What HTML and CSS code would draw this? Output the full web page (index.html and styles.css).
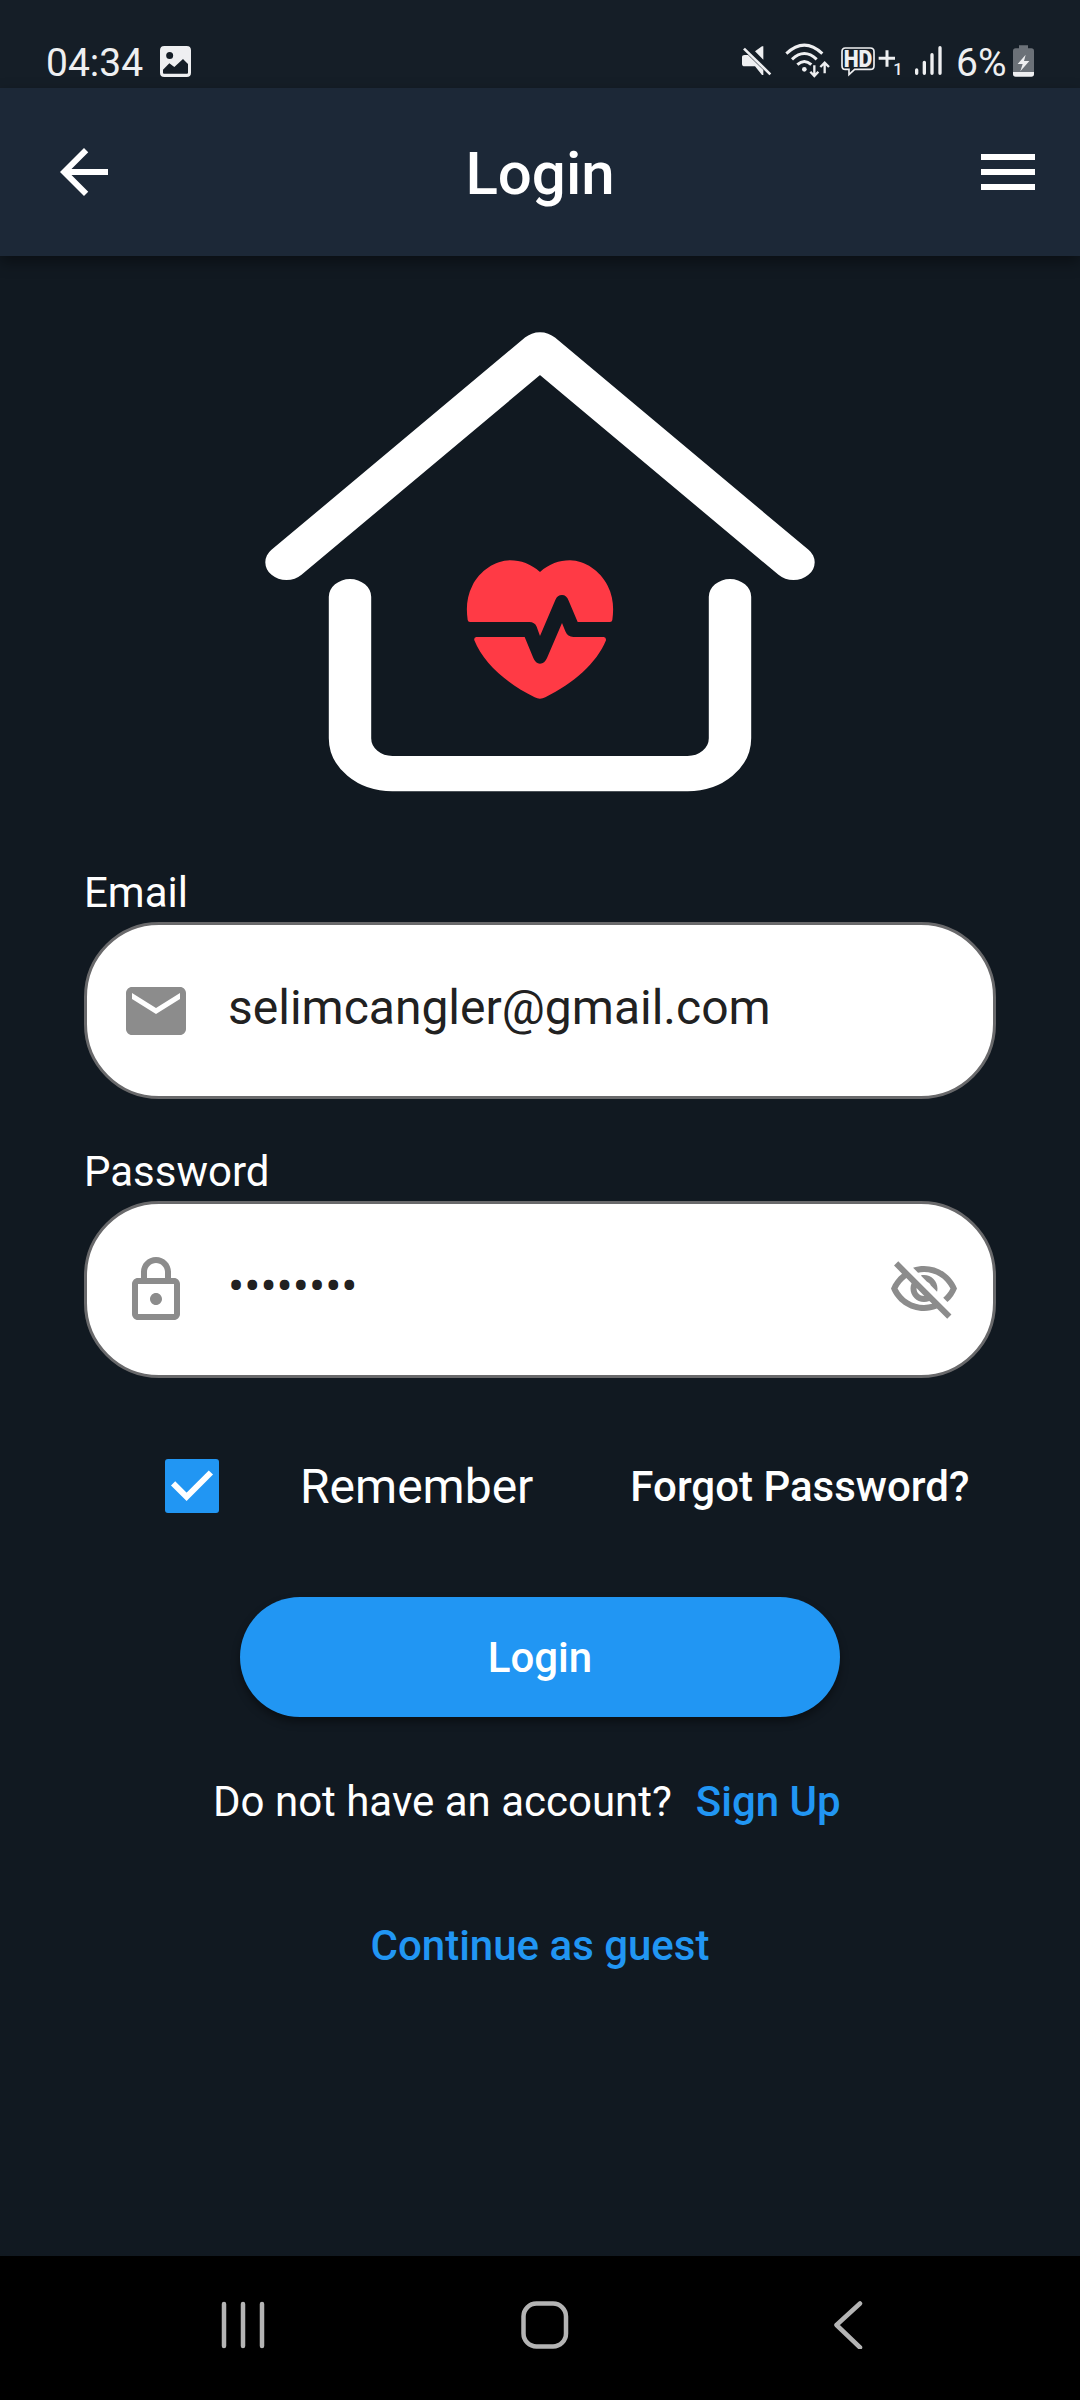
FILE: index.html
```html
<!DOCTYPE html>
<html lang="en">
<head>
<meta charset="utf-8">
<title>Login</title>
<link rel="stylesheet" href="styles.css">
</head>
<body>
<div class="screen">
  <div class="status-bar">
    <span class="clock">04:34</span>
    <svg class="status-picture" viewBox="0 0 93 93"><path fill="currentColor" fill-rule="evenodd" d="M13 0H80Q93 0 93 13V80Q93 93 80 93H13Q0 93 0 80V13Q0 0 13 0ZM29 18A10.500 10.500 0 1 0 29 39A10.500 10.500 0 1 0 29 18ZM9 71V80Q9 83 12 83H81Q84 83 84 80V54L69 39L43 63L28 52Z"/></svg>
    <div class="status-icons">
      <svg class="icon-mute" viewBox="60 60 120 120"><path fill="currentColor" d="M66 112Q66 105 74 105H84L130 150V165H126L105 139H74Q66 139 66 131ZM105 94L126 79H130V119Z"/><path d="M77 80L158 158" fill="none" stroke="#151e27" stroke-width="7"/><path d="M72 86L151 163" fill="none" stroke="currentColor" stroke-width="8"/></svg>
      <svg class="icon-wifi" viewBox="180 60 165 120" fill="none" stroke="currentColor" stroke-width="9"><path d="M199 101Q253 50 307 101M216 118Q253 83 290 118M232 134Q253 115 274 134"/><circle cx="253" cy="148" r="7" fill="currentColor" stroke="none"/><path stroke-width="7" d="M283 136V167M271 155L283 168L295 155M314 160V129M301 141L314 128L327 141"/></svg>
      <svg class="icon-hd" viewBox="345 60 225 120" fill="none" stroke="currentColor"><path stroke-width="5" d="M376 84H451Q462 84 462 95V137Q462 148 451 148H404L387 164V148H376Q366 148 366 137V95Q366 84 376 84Z"/><path stroke-width="9" d="M476 115H525M501 91V140"/><text class="hd-text" x="371" y="141" textLength="86" lengthAdjust="spacingAndGlyphs">HD</text><text class="sim-text" x="520" y="165">1</text></svg>
      <svg class="icon-signal" viewBox="570 60 120 120" stroke="currentColor" stroke-width="10" stroke-linecap="round"><path d="M590 150V160M613 127V160M636 104V160M660 83V160"/></svg>
      <span class="percent">6%</span>
      <svg class="icon-battery" viewBox="876 60 69 120"><path fill="#6b7178" d="M897 76H924V85H934Q942 85 942 93V156H879V93Q879 85 887 85H897Z"/><path fill="currentColor" d="M879 156H942V163Q942 170 934 170H887Q879 170 879 163ZM917 104L893 132H908L901 154L928 123H912Z"/></svg>
    </div>
  </div>

  <header class="app-bar">
    <svg class="icon" viewBox="0 0 24 24"><path d="M20 11H7.830l5.590-5.590L12 4l-8 8 8 8 1.410-1.410L7.830 13H20v-2z"/></svg>
    <h1 class="title">Login</h1>
    <svg class="icon" viewBox="0 0 24 24"><path d="M3 18h18v-2H3v2zm0-5h18v-2H3v2zm0-7v2h18V6H3z"/></svg>
  </header>

  <main class="content">
    <svg class="logo" viewBox="0 0 580 500">
      <g transform="scale(1 .835)" fill="none" stroke="#fff" stroke-width="42.400" stroke-linecap="round" stroke-linejoin="round">
        <path d="M36.500 302.200L290 47.900L543.500 302.200"/>
        <path d="M100 343.400V512.800A42.400 42.400 0 0 0 142.400 555.200H437.600A42.400 42.400 0 0 0 480 512.800V343.400"/>
      </g>
      <svg x="190" y="230" width="200" height="170" viewBox="0 0 600 510">
        <path fill="#ff3a45" d="M90 246Q84 246 83 240C78 205 80 170 97 137C120 92 165 62 210 61C243 61 272 72 300 96C328 72 357 61 390 61C435 62 480 92 503 137C520 170 522 205 517 240Q516 246 510 246H413L386 182Q380 165 366 165Q352 165 346 180L300 288L290 260Q284 246 268 246Z"/>
        <path fill="#ff3a45" d="M109 291H254L280 354Q287 371 300 371Q314 371 321 354L366 249L376 274Q383 291 400 291H491Q499 292 498 301C470 370 400 430 316 472Q300 480 284 472C200 430 130 370 103 301Q101 292 109 291Z"/>
      </svg>
    </svg>

    <div class="form-field">
      <div class="label">Email</div>
      <div class="input">
        <svg class="icon" viewBox="0 0 24 24"><path d="M20 4H4c-1.100 0-1.990.9-1.990 2L2 18c0 1.100.9 2 2 2h16c1.100 0 2-.9 2-2V6c0-1.100-.9-2-2-2zm0 4l-8 5-8-5V6l8 5 8-5v2z"/></svg>
        <span class="value">selimcangler@gmail.com</span>
      </div>
    </div>
    <div class="form-field">
      <div class="label">Password</div>
      <div class="input">
        <svg class="icon" viewBox="0 0 24 24"><path d="M18 8h-1V6c0-2.760-2.240-5-5-5S7 3.240 7 6v2H6c-1.100 0-2 .9-2 2v10c0 1.100.9 2 2 2h12c1.100 0 2-.9 2-2V10c0-1.100-.9-2-2-2zM9 6c0-1.660 1.340-3 3-3s3 1.340 3 3v2H9V6zm9 14H6V10h12v10zm-6-3c1.100 0 2-.9 2-2s-.9-2-2-2-2 .9-2 2 .9 2 2 2z"/></svg>
        <span class="value">••••••••</span>
        <svg class="icon" viewBox="0 0 24 24"><path d="M12 6c3.790 0 7.170 2.130 8.820 5.500-.59 1.220-1.420 2.270-2.410 3.120l1.410 1.410c1.390-1.230 2.490-2.770 3.180-4.530C21.270 7.110 17 4 12 4c-1.270 0-2.490.2-3.640.57l1.650 1.650C10.660 6.090 11.320 6 12 6zm-1.070 1.140L13 9.210c.57.25 1.030.71 1.280 1.280l2.070 2.070c.08-.34.14-.7.14-1.070C16.500 9.010 14.480 7 12 7c-.37 0-.72.05-1.070.14zM2.010 3.870l2.680 2.680C3.060 7.830 1.770 9.530 1 11.500 2.730 15.890 7 19 12 19c1.520 0 2.980-.29 4.320-.82l3.420 3.420 1.410-1.410L3.420 2.450 2.010 3.870zm7.500 7.500l2.610 2.610c-.04.01-.08.02-.12.02-1.380 0-2.500-1.120-2.500-2.500 0-.05.01-.08.01-.13zm-3.400-3.400l1.750 1.750c-.23.55-.36 1.150-.36 1.780 0 2.480 2.020 4.500 4.500 4.500.63 0 1.230-.13 1.770-.36l.98.98c-.88.24-1.800.38-2.750.38-3.790 0-7.170-2.130-8.820-5.500.7-1.430 1.720-2.610 2.930-3.530z"/></svg>
      </div>
    </div>

    <div class="options">
      <svg class="checkbox" viewBox="0 0 54 54"><rect width="54" height="54" rx="3" fill="#2196f3"/><path d="M8.100 24.300L21.600 37.800L45.900 13.500" fill="none" stroke="#fff" stroke-width="6"/></svg>
      <span class="remember">Remember</span>
      <a class="forgot">Forgot Password?</a>
    </div>

    <button class="login-button">Login</button>

    <div class="signup">
      <span>Do not have an account?</span>
      <a class="link">Sign Up</a>
    </div>
    <a class="link guest">Continue as guest</a>
  </main>

  <nav class="nav-bar">
    <svg class="nav-icon" viewBox="0 0 48 48"><path d="M5 3V45M24 3V45M43 3V45"/></svg>
    <svg class="nav-icon" viewBox="0 0 48 48"><rect x="2.500" y="2.500" width="42.500" height="43" rx="13"/></svg>
    <svg class="nav-icon" viewBox="0 0 48 48"><path d="M36 2.500L12.500 24L36 46.500"/></svg>
  </nav>
</div>
</body>
</html>
```
FILE: styles.css
```css
* { box-sizing: border-box; }

body {
  margin: 0;
  background: #111921;
  color: #fff;
  font-family: Roboto, "Liberation Sans", sans-serif;
}

.screen {
  display: flex;
  flex-direction: column;
  width: 1080px;
  height: 2400px;
  overflow: hidden;
}

.status-bar {
  display: flex;
  flex: none;
  height: 88px;
  padding: 40px 45px 0 46px;
  background: #151e27;
  color: #eeeff1;
  font-size: 39px;
  line-height: 44px;
}

.status-picture {
  width: 31px;
  height: 31px;
  margin: 6px 0 0 16px;
}

.clock {
  width: 98px;
  padding-top: 1px;
  white-space: nowrap;
}

.status-icons {
  display: flex;
  margin-left: auto;
}

.status-icons svg { height: 40px; }
.icon-mute { width: 40px; }
.icon-wifi { width: 55px; }
.icon-hd { width: 75px; }
.icon-signal { width: 40px; }
.icon-battery { width: 23px; }

.hd-text,
.sim-text {
  fill: currentColor;
  stroke: none;
  font-weight: 900;
  font-size: 72px;
}

.sim-text {
  font-weight: 500;
  font-size: 49px;
}

.percent {
  width: 62px;
  padding: 1px 0 0 6px;
}

.icon {
  flex: none;
  width: 72px;
  height: 72px;
  fill: currentColor;
}

.app-bar {
  position: relative;
  display: flex;
  flex: none;
  align-items: center;
  justify-content: space-between;
  height: 168px;
  padding: 0 36px 0 48px;
  background: #1c2837;
  box-shadow: 0 6px 14px rgba(0, 0, 0, .4);
}

.title {
  margin: 3px 12px 0 0;
  font-size: 60px;
  font-weight: 500;
  line-height: 70px;
}

.content {
  display: flex;
  flex: 1;
  flex-direction: column;
  min-height: 0;
  padding-top: 54px;
}

.logo {
  flex: none;
  align-self: center;
  width: 580px;
  height: 500px;
  margin-bottom: 58px;
}

.form-field {
  flex: none;
  height: 231px;
  margin: 0 84px 48px;
}

.label {
  height: 54px;
  font-size: 42px;
  line-height: 49px;
}

.input {
  display: flex;
  align-items: center;
  height: 177px;
  padding: 0 33px;
  border: 3px solid #69696b;
  border-radius: 75px;
  background: #fff;
  color: #8c8c8c;
}

.value {
  flex: 1;
  margin: -6px 0 0 36px;
  color: #212121;
  font-size: 48px;
  line-height: 56px;
}

.options {
  display: flex;
  flex: none;
  align-items: center;
  height: 54px;
  margin-top: 33px;
  padding-left: 165px;
}

.checkbox {
  width: 54px;
  height: 54px;
}

.remember {
  margin-left: 81px;
  font-size: 48px;
}

.forgot {
  margin-left: 97px;
  font-size: 42px;
  font-weight: 500;
}

.login-button {
  flex: none;
  align-self: center;
  width: 600px;
  height: 120px;
  margin-top: 84px;
  padding: 2px 0 0;
  border: 0;
  border-radius: 60px;
  background: #2196f3;
  box-shadow: 0 5px 8px rgba(0, 0, 0, .4);
  color: #fff;
  font: 500 42px/50px Roboto, sans-serif;
}

.signup {
  display: flex;
  gap: 24px;
  margin-top: 60px;
  padding-left: 213px;
  font-size: 42px;
  line-height: 49px;
}

.link {
  color: #2196f3;
  font-weight: 500;
}

.guest {
  align-self: center;
  margin-top: 95px;
  font-size: 42px;
  line-height: 49px;
}

.nav-bar {
  display: flex;
  flex: none;
  justify-content: space-between;
  height: 144px;
  padding: 45px 208px 0 219px;
  background: #000;
}

.nav-icon {
  width: 48px;
  height: 48px;
  fill: none;
  stroke: #b4b4b4;
  stroke-width: 4.500;
  stroke-linecap: round;
  stroke-linejoin: round;
}

.nav-icon:nth-child(2) {
  margin-right: 2px;
}
```
